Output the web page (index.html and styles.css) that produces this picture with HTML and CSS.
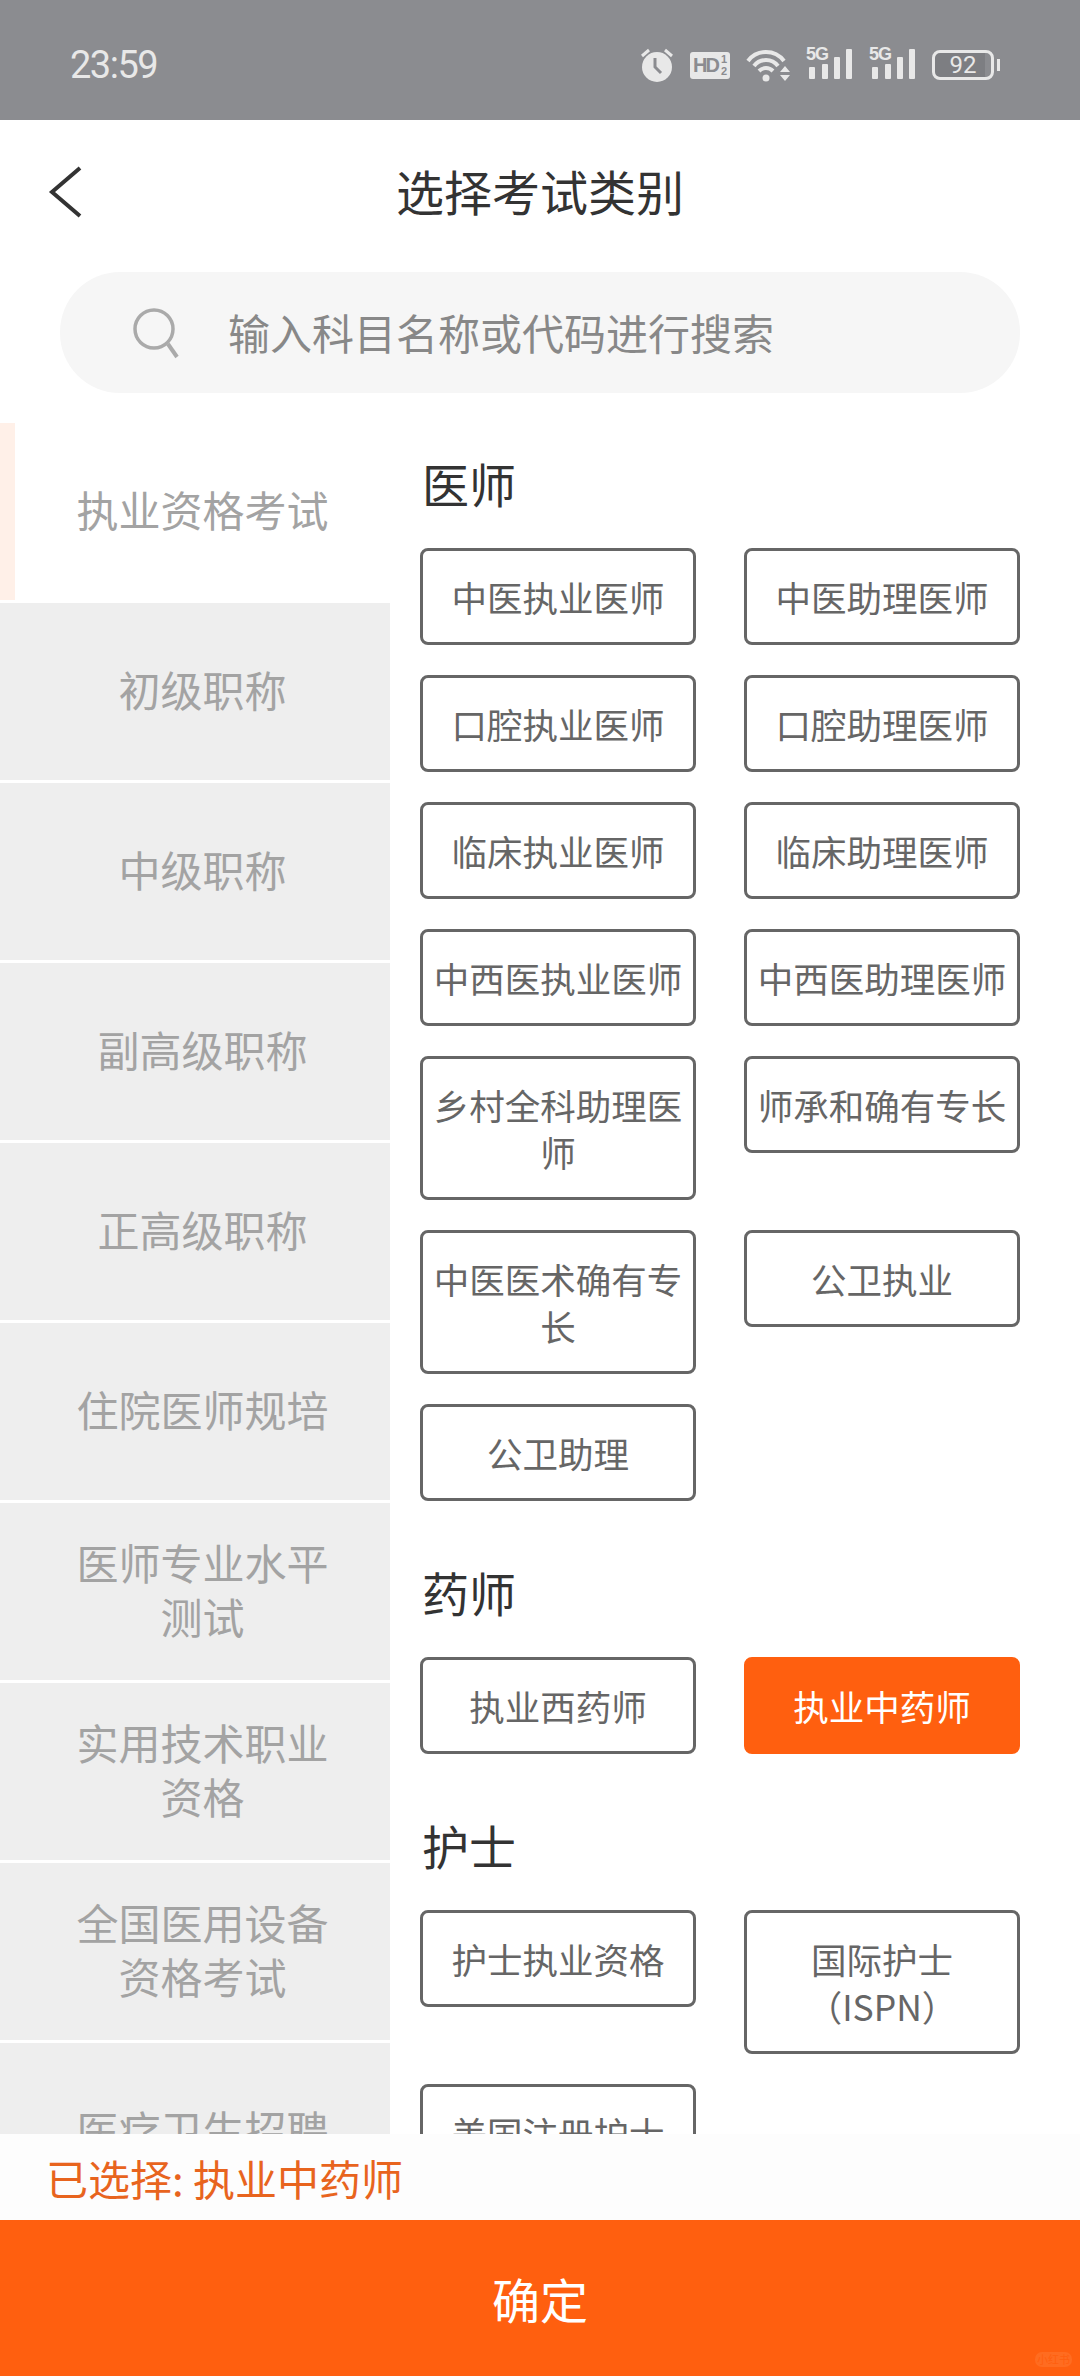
FILE: index.html
```html
<!DOCTYPE html>
<html lang="zh-CN">
<head>
    <meta charset="UTF-8">
    <meta name="viewport" content="width=device-width, initial-scale=1.0">
    <title>选择考试类别</title>
    <link rel="stylesheet" href="styles.css">
</head>
<body>
    <div class="app">
        <div class="status-bar">
            <span class="time">23:59</span>
            <div class="status-icons">
                <svg width="34" height="34" viewBox="0 0 34 34">
                    <path d="M2 8 L9 2 M32 8 L25 2" stroke="#e8e8e8" stroke-width="3" fill="none"/>
                    <circle cx="17" cy="19" r="15" fill="#e8e8e8"/>
                    <path d="M15 10 V19 L21 25" stroke="#8b8c90" stroke-width="3" fill="none"/>
                </svg>
                <div class="hd-badge">HD<span class="hd-frac"><i>1</i><i>2</i></span></div>
                <svg width="44" height="34" viewBox="0 0 44 34">
                    <path d="M2 13 C11 1 29 1 38 13" stroke="#e8e8e8" stroke-width="4" fill="none"/>
                    <path d="M8 18 C14 10 26 10 32 18" stroke="#e8e8e8" stroke-width="4" fill="none"/>
                    <path d="M13 23 C17 19 23 19 27 23" stroke="#e8e8e8" stroke-width="4" fill="none"/>
                    <circle cx="20" cy="30" r="3.5" fill="#e8e8e8"/>
                    <path d="M34 24 L39 18 L44 24 Z M34 27 H44 L39 33 Z" fill="#e8e8e8"/>
                </svg>
                <div class="signal">
                    <span class="tag-5g">5G</span>
                    <svg width="47" height="32" viewBox="0 0 47 32">
                        <rect x="3" y="19" width="6" height="12" rx="1" fill="#e8e8e8"/>
                        <rect x="16" y="16" width="6" height="15" rx="1" fill="#e8e8e8"/>
                        <rect x="28" y="9" width="6" height="22" rx="1" fill="#e8e8e8"/>
                        <rect x="40" y="1" width="6" height="30" rx="1" fill="#e8e8e8"/>
                    </svg>
                </div>
                <div class="signal">
                    <span class="tag-5g">5G</span>
                    <svg width="47" height="32" viewBox="0 0 47 32">
                        <rect x="3" y="19" width="6" height="12" rx="1" fill="#e8e8e8"/>
                        <rect x="16" y="16" width="6" height="15" rx="1" fill="#e8e8e8"/>
                        <rect x="28" y="9" width="6" height="22" rx="1" fill="#e8e8e8"/>
                        <rect x="40" y="1" width="6" height="30" rx="1" fill="#e8e8e8"/>
                    </svg>
                </div>
                <div class="battery"><span class="battery-level">92</span></div>
            </div>
        </div>

        <div class="header">
            <svg class="back-icon" width="36" height="52" viewBox="0 0 36 52">
                <path d="M32 2 L4 26 L32 50" stroke="#333" stroke-width="4" fill="none"/>
            </svg>
            <h1>选择考试类别</h1>
        </div>

        <div class="search-box">
            <svg width="50" height="52" viewBox="0 0 50 52">
                <circle cx="22" cy="22" r="19" stroke="#aaa" stroke-width="3.5" fill="none"/>
                <path d="M36 37 L45 50" stroke="#aaa" stroke-width="4" fill="none"/>
            </svg>
            <span class="placeholder">输入科目名称或代码进行搜索</span>
        </div>

        <div class="content">
            <div class="sidebar">
                <div class="side-item active">执业资格考试</div>
                <div class="side-item">初级职称</div>
                <div class="side-item">中级职称</div>
                <div class="side-item">副高级职称</div>
                <div class="side-item">正高级职称</div>
                <div class="side-item">住院医师规培</div>
                <div class="side-item">医师专业水平测试</div>
                <div class="side-item">实用技术职业资格</div>
                <div class="side-item">全国医用设备资格考试</div>
                <div class="side-item">医疗卫生招聘</div>
            </div>
            <div class="options">
                <h2>医师</h2>
                <div class="option-grid">
                    <div class="option">中医执业医师</div>
                    <div class="option">中医助理医师</div>
                    <div class="option">口腔执业医师</div>
                    <div class="option">口腔助理医师</div>
                    <div class="option">临床执业医师</div>
                    <div class="option">临床助理医师</div>
                    <div class="option">中西医执业医师</div>
                    <div class="option">中西医助理医师</div>
                    <div class="option">乡村全科助理医师</div>
                    <div class="option">师承和确有专长</div>
                    <div class="option">中医医术确有专长</div>
                    <div class="option">公卫执业</div>
                    <div class="option">公卫助理</div>
                </div>
                <h2>药师</h2>
                <div class="option-grid">
                    <div class="option">执业西药师</div>
                    <div class="option selected">执业中药师</div>
                </div>
                <h2>护士</h2>
                <div class="option-grid">
                    <div class="option">护士执业资格</div>
                    <div class="option">国际护士（ISPN）</div>
                    <div class="option">美国注册护士</div>
                </div>
            </div>
        </div>

        <div class="selected-bar">已选择: 执业中药师</div>
        <div class="confirm-btn">
            确定
            <span class="watermark">小红书</span>
        </div>
    </div>
</body>
</html>
```

FILE: styles.css
```css
* {
    box-sizing: border-box;
}
body {
    margin: 0;
    font-family: "Noto Sans CJK SC", "Noto Sans", sans-serif;
    background-color: #fff;
}
.app {
    width: 1080px;
    height: 2376px;
    display: flex;
    flex-direction: column;
    overflow: hidden;
}
.status-bar {
    height: 120px;
    flex-shrink: 0;
    background-color: #8b8c90;
    display: flex;
    align-items: center;
    justify-content: space-between;
    padding: 10px 82px 0 70px;
    color: #e8e8e8;
}
.time {
    font-family: Roboto, sans-serif;
    font-size: 38px;
    letter-spacing: -1.5px;
}
.status-icons {
    display: flex;
    align-items: center;
    gap: 16px;
}
.hd-badge {
    width: 40px;
    height: 27px;
    background-color: #e8e8e8;
    border-radius: 3px;
    color: #8b8c90;
    font-family: "Liberation Sans", sans-serif;
    font-size: 20px;
    font-weight: bold;
    letter-spacing: -2px;
    display: flex;
    align-items: center;
    padding-left: 3px;
}
.hd-frac {
    display: flex;
    flex-direction: column;
    font-size: 11px;
    line-height: 12px;
    letter-spacing: 0;
    margin-left: 3px;
}
.hd-frac i {
    font-style: normal;
}
.signal {
    position: relative;
    width: 47px;
    height: 32px;
    margin-bottom: 2px;
    display: flex;
}
.tag-5g {
    position: absolute;
    left: 0;
    top: -3px;
    font-family: "Liberation Sans", sans-serif;
    font-size: 18px;
    font-weight: bold;
    letter-spacing: -1px;
    line-height: 18px;
}
.battery {
    width: 62px;
    height: 30px;
    margin-right: 4px;
    border: 3px solid #e8e8e8;
    border-radius: 8px;
    position: relative;
    display: flex;
    align-items: center;
    justify-content: center;
    background: linear-gradient(to right, #7d7e82 90%, #8b8c90 90%);
}
.battery::after {
    content: "";
    position: absolute;
    right: -9px;
    top: 6px;
    width: 3px;
    height: 12px;
    background-color: #e8e8e8;
}
.battery-level {
    font-family: Roboto, sans-serif;
    font-size: 24px;
    line-height: 1;
}
.header {
    height: 152px;
    flex-shrink: 0;
    position: relative;
    display: flex;
    align-items: center;
    justify-content: center;
    padding-bottom: 13px;
}
.back-icon {
    position: absolute;
    left: 48px;
    top: 46px;
}
h1 {
    margin: 0;
    font-size: 48px;
    font-weight: 400;
    color: #333;
}
.search-box {
    height: 121px;
    flex-shrink: 0;
    margin: 0 60px 30px;
    background-color: #f6f6f6;
    border-radius: 60px;
    display: flex;
    align-items: center;
    padding-left: 72px;
    gap: 46px;
}
.placeholder {
    font-size: 42px;
    color: #888;
    margin-bottom: 2px;
}
.content {
    flex: 1;
    min-height: 0;
    display: flex;
    overflow: hidden;
}
.sidebar {
    width: 390px;
    flex-shrink: 0;
    display: flex;
    flex-direction: column;
    gap: 3px;
}
.side-item {
    height: 177px;
    flex-shrink: 0;
    background-color: #eee;
    border-left: 15px solid #eee;
    padding: 0 50px 5px;
    display: flex;
    align-items: center;
    justify-content: center;
    text-align: center;
    font-size: 42px;
    line-height: 54px;
    color: #a3a3a3;
}
.side-item.active {
    background-color: #fff;
    border-left-color: #fff0e8;
}
.options {
    flex: 1;
    padding: 0 60px 0 30px;
}
h2 {
    margin: 0;
    font-size: 47px;
    font-weight: 400;
    line-height: 70px;
    color: #333;
    padding-left: 2px;
}
.options h2:first-child {
    margin-top: 25px;
}
.option-grid {
    display: grid;
    grid-template-columns: 276px 276px;
    column-gap: 48px;
    row-gap: 30px;
    align-items: start;
    margin-top: 30px;
    margin-bottom: 56px;
}
.option {
    border: 3px solid #666;
    border-radius: 8px;
    padding: 22px 8px;
    font-size: 35.5px;
    line-height: 47px;
    text-align: center;
    color: #666;
}
.option.selected {
    background-color: #ff5f0f;
    border-color: #ff5f0f;
    color: #fff;
}
.selected-bar {
    height: 86px;
    flex-shrink: 0;
    background-color: #fdfdfd;
    padding-left: 46px;
    display: flex;
    align-items: center;
    font-size: 42px;
    color: #e8641e;
}
.confirm-btn {
    height: 156px;
    flex-shrink: 0;
    position: relative;
    background-color: #ff5f0f;
    color: #fff;
    font-size: 48px;
    display: flex;
    align-items: center;
    justify-content: center;
}
.watermark {
    position: absolute;
    right: 8px;
    bottom: 9px;
    width: 37px;
    height: 15px;
    border-radius: 7px;
    background-color: #ff6c20;
    color: #ff5f0f;
    font-size: 11px;
    line-height: 15px;
    text-align: center;
}
```
